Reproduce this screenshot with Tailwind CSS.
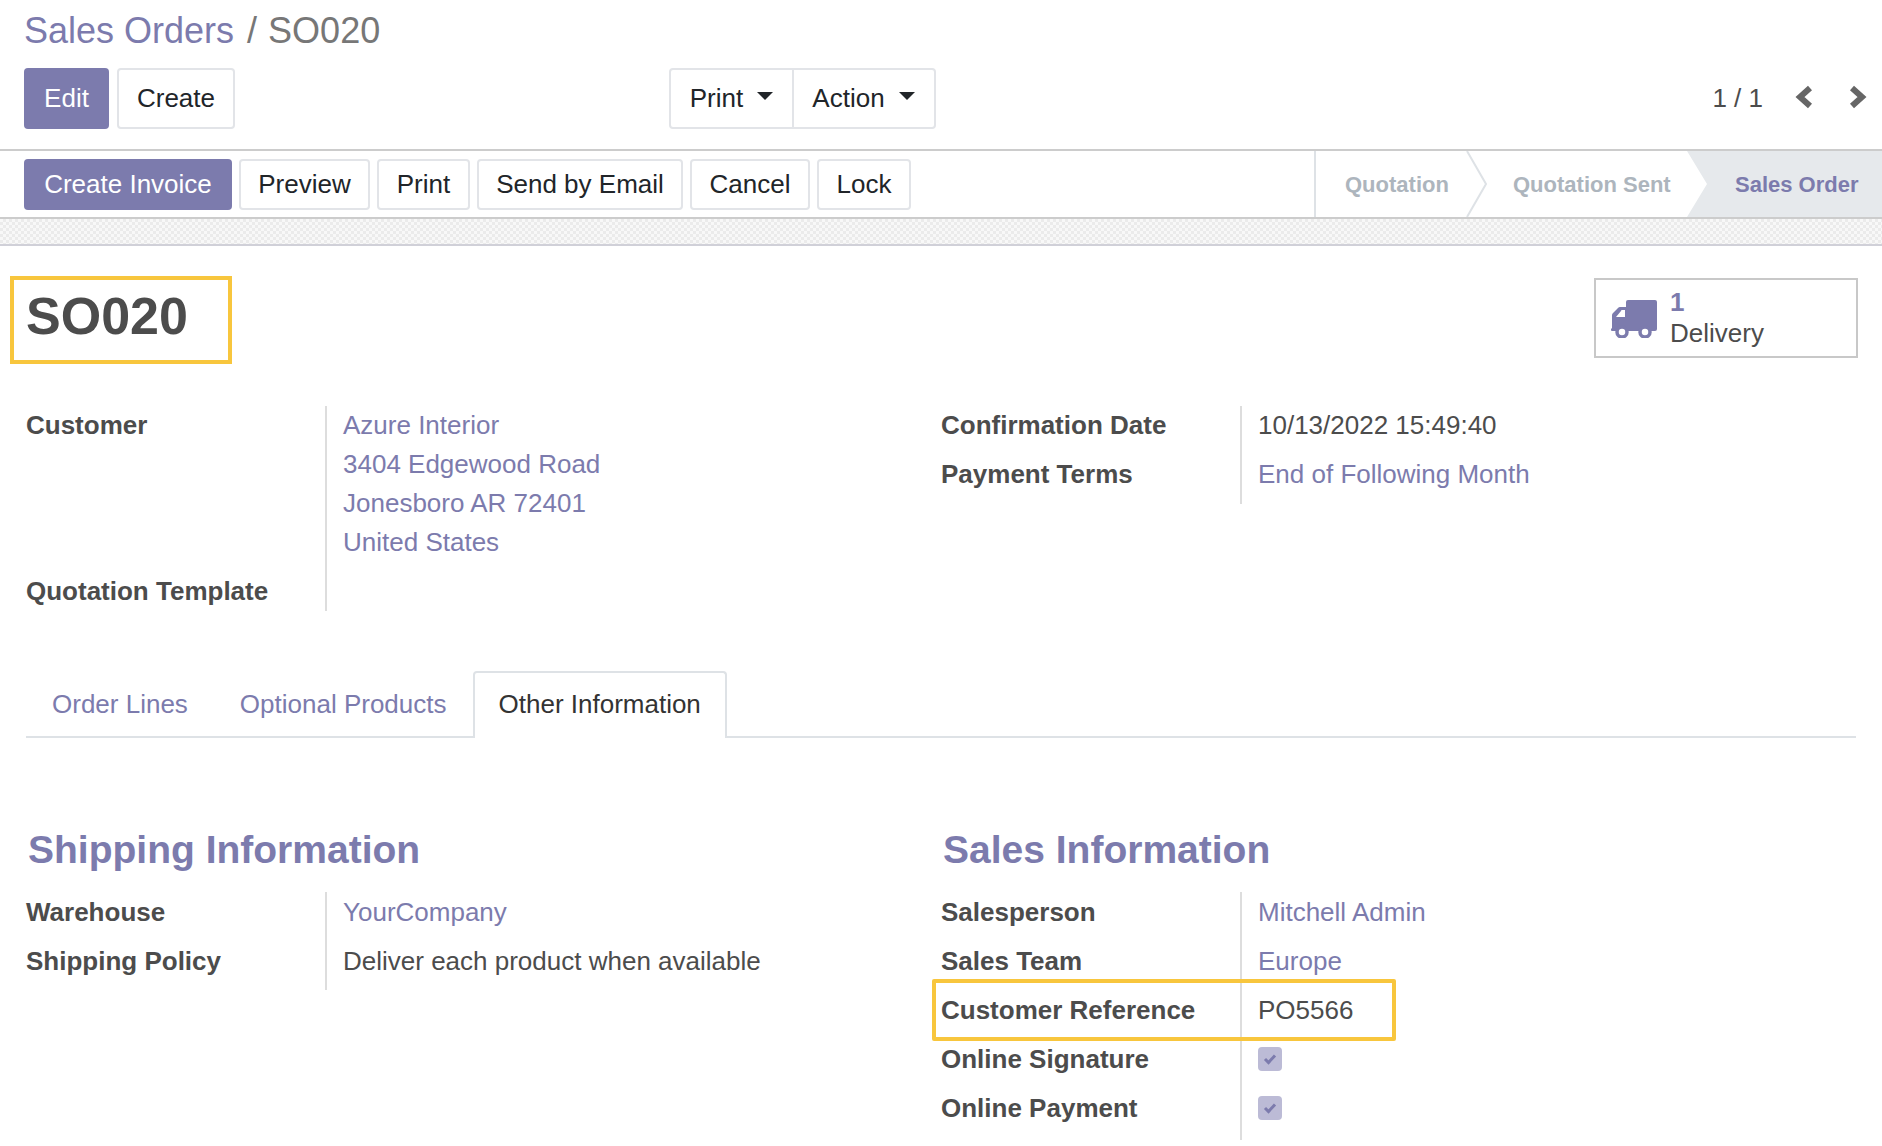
<!DOCTYPE html>
<html lang="en">
<head>
  <meta charset="UTF-8">
  <title>SO020 - Sales Orders</title>
  <script src="https://cdn.jsdelivr.net/npm/@tailwindcss/browser@4"></script>
</head>
<body class="bg-white text-[#4c4c4c] font-['Liberation_Sans',Arial,sans-serif] text-[26px] leading-[36px]">
  <div class="w-[1882px] h-[1146px] overflow-hidden">

    <!-- Control panel -->
    <div class="h-[149px] px-6">
      <div class="h-[60px] pt-[1px] flex items-center text-[36px] text-[#777]">
        <span class="text-[#7c7bad]">Sales Orders</span>
        <span class="ml-[13px] mr-[11px]">/</span>
        <span>SO020</span>
      </div>
      <div class="h-[61px] mt-[8px] flex items-center text-[#212529]">
        <div class="w-[645px] flex gap-[8px]">
          <div class="h-[61px] w-[85px] pb-[2px] rounded-[4px] bg-[#7c7bad] text-white flex items-center justify-center">Edit</div>
          <div class="h-[61px] w-[118px] pb-[2px] rounded-[4px] border-2 border-[#e2e4e8] flex items-center justify-center">Create</div>
        </div>
        <div class="h-[61px] w-[267px] pb-[2px] rounded-[4px] border-2 border-[#e2e4e8] flex">
          <div class="w-[123px] mb-[-2px] pb-[2px] border-r-2 border-[#e2e4e8] flex items-center justify-center gap-[14px]">Print<span class="mb-[3px] border-x-[8px] border-t-[8px] border-x-transparent border-t-[#212529]"></span></div>
          <div class="flex-1 pr-[1px] flex items-center justify-center gap-[14px]">Action<span class="mb-[3px] border-x-[8px] border-t-[8px] border-x-transparent border-t-[#212529]"></span></div>
        </div>
        <div class="ml-auto flex items-center pb-[2px] text-[#4c4c4c]">
          <span class="mr-[32px]">1 / 1</span>
          <svg class="w-[18px] h-[24px] mr-[36px] mb-[2px]" viewBox="0 0 18 24" fill="none" stroke="#666" stroke-width="6"><path d="M15 3 5 12l10 9"/></svg>
          <svg class="w-[18px] h-[24px] mr-[-9px] mb-[2px]" viewBox="0 0 18 24" fill="none" stroke="#666" stroke-width="6"><path d="M3 3l10 9-10 9"/></svg>
        </div>
      </div>
    </div>

    <!-- Status bar -->
    <div class="h-[70px] border-y-2 border-[#ccc] flex items-center justify-between pl-6">
      <div class="flex gap-[7px] text-[#212529]">
        <div class="h-[51px] w-[208px] rounded-[4px] bg-[#7c7bad] text-white flex items-center justify-center">Create Invoice</div>
        <div class="h-[51px] w-[131px] rounded-[4px] border-2 border-[#e2e4e8] flex items-center justify-center">Preview</div>
        <div class="h-[51px] w-[93px] rounded-[4px] border-2 border-[#e2e4e8] flex items-center justify-center">Print</div>
        <div class="h-[51px] w-[206px] rounded-[4px] border-2 border-[#e2e4e8] flex items-center justify-center">Send by Email</div>
        <div class="h-[51px] w-[120px] rounded-[4px] border-2 border-[#e2e4e8] flex items-center justify-center">Cancel</div>
        <div class="h-[51px] w-[94px] rounded-[4px] border-2 border-[#e2e4e8] flex items-center justify-center">Lock</div>
      </div>
      <div class="w-[568px] h-[66px] border-l-2 border-[#dee2e6] flex text-[22px] font-bold text-[#adb5bd]">
        <div class="relative w-[151px] pl-[29px] pt-[2px] flex items-center">
          Quotation
          <svg class="absolute left-[150px] top-0 w-[22px] h-[66px]" viewBox="0 0 22 66" fill="none" stroke="#dee2e6" stroke-width="2"><path d="M1 0l19 33L1 66"/></svg>
        </div>
        <div class="w-[220px] pl-[46px] pt-[2px] flex items-center">Quotation Sent</div>
        <div class="flex-1 pl-[48px] pt-[2px] flex items-center bg-[#e6e9ec] text-[#7c7bad] [clip-path:polygon(0_0,100%_0,100%_100%,0_100%,20px_50%)]">Sales Order</div>
      </div>
    </div>
    <div class="h-[27px] border-b-2 border-[#d0d0d8] bg-[repeating-conic-gradient(#ebebeb_0%_25%,#f8f8f8_0%_50%)] bg-size-[6px_6px]"></div>

    <!-- Sheet -->
    <div class="pl-[26px] pr-[24px]">
      <div class="h-[133px] pt-[31px] flex justify-between">
        <div class="ml-[-16px] mt-[-1px] w-[222px] h-[88px] border-4 border-[#f8c63d] pl-[12px] pt-[6px] text-[52px] leading-[60px] font-bold">SO020</div>
        <div class="w-[264px] h-[80px] mt-[1px] border-2 border-[#c8c8c8] flex items-center pl-[15px] gap-[13px] leading-[31px]">
          <svg class="w-[46px] h-[38px] mt-[1px]" viewBox="0 0 46 38">
            <path fill="#7c7bad" d="M15 2a2 2 0 0 1 2-2h27a2 2 0 0 1 2 2v27a2 2 0 0 1-2 2H1a1 1 0 0 1-1-1v-1l1-1v-13a3 3 0 0 1 1-2l5-5a3 3 0 0 1 2-1h6z"/>
            <path fill="#fff" d="M5 17l5-6a1 1 0 0 1 1-1h3v7z"/>
            <circle cx="11" cy="32" r="5" fill="#fff" stroke="#7c7bad" stroke-width="3.500"/>
            <circle cx="34" cy="32" r="5" fill="#fff" stroke="#7c7bad" stroke-width="3.500"/>
          </svg>
          <div>
            <div class="font-bold text-[#7c7bad]">1</div>
            <div>Delivery</div>
          </div>
        </div>
      </div>

      <!-- Customer / dates -->
      <div class="h-[292px] pt-[27px] flex">
        <div class="w-[915px] flex">
          <div class="w-[299px] font-bold">
            <div class="pt-[1px]">Customer</div>
            <div class="mt-[130px]">Quotation Template</div>
          </div>
          <div class="h-[205px] border-l-2 border-[#dddddd] pl-[16px] text-[#7c7bad] leading-[39px]">
            <div>Azure Interior</div>
            <div>3404 Edgewood Road</div>
            <div>Jonesboro AR 72401</div>
            <div>United States</div>
          </div>
        </div>
        <div class="flex">
          <div class="w-[299px] font-bold leading-[49px] h-[98px]">
            <div class="mt-[-5px]">Confirmation Date</div>
            <div>Payment Terms</div>
          </div>
          <div class="h-[98px] border-l-2 border-[#dddddd] pl-[16px] leading-[49px]">
            <div class="mt-[-5px]">10/13/2022 15:49:40</div>
            <div class="text-[#7c7bad]">End of Following Month</div>
          </div>
        </div>
      </div>

      <!-- Tabs -->
      <div class="h-[67px] mr-[2px] border-b-2 border-[#dee2e6] flex items-stretch">
        <div class="px-[26px] flex items-center text-[#7c7bad]">Order Lines</div>
        <div class="px-[26px] flex items-center text-[#7c7bad]">Optional Products</div>
        <div class="h-[67px] px-[24px] pb-[4px] border-2 border-b-0 border-[#dee2e6] rounded-t-[4px] bg-white flex items-center text-[#333]">Other Information</div>
      </div>

      <!-- Other information -->
      <div class="pt-[88px] flex">
        <div class="w-[915px]">
          <div class="pl-[2px] h-[47px] flex items-center text-[39px] font-bold text-[#7c7bad]">Shipping Information</div>
          <div class="mt-[19px] flex leading-[49px]">
            <div class="w-[299px] font-bold">
              <div class="mt-[-4px]">Warehouse</div>
              <div>Shipping Policy</div>
            </div>
            <div class="h-[98px] border-l-2 border-[#dddddd] pl-[16px]">
              <div class="mt-[-4px] text-[#7c7bad]">YourCompany</div>
              <div>Deliver each product when available</div>
            </div>
          </div>
        </div>
        <div>
          <div class="pl-[2px] h-[47px] flex items-center text-[39px] font-bold text-[#7c7bad]">Sales Information</div>
          <div class="mt-[19px] relative flex leading-[49px]">
            <div class="absolute left-[-9px] top-[87px] w-[464px] h-[62px] border-4 border-[#f8c63d] rounded-[2px]"></div>
            <div class="w-[299px] font-bold">
              <div class="mt-[-4px]">Salesperson</div>
              <div>Sales Team</div>
              <div>Customer Reference</div>
              <div>Online Signature</div>
              <div>Online Payment</div>
            </div>
            <div class="h-[248px] border-l-2 border-[#dddddd] pl-[16px]">
              <div class="mt-[-4px] text-[#7c7bad]">Mitchell Admin</div>
              <div class="text-[#7c7bad]">Europe</div>
              <div>PO5566</div>
              <div class="h-[49px] mt-[-1px] flex items-center">
                <div class="w-[24px] h-[24px] rounded-[4px] bg-[#bcbbd6] flex items-center justify-center">
                  <svg class="w-[14px] h-[12px]" viewBox="0 0 14 12" fill="none" stroke="#7c7bad" stroke-width="3"><path d="M2 6l3.500 3.500L12 2.500"/></svg>
                </div>
              </div>
              <div class="h-[49px] flex items-center">
                <div class="w-[24px] h-[24px] rounded-[4px] bg-[#bcbbd6] flex items-center justify-center">
                  <svg class="w-[14px] h-[12px]" viewBox="0 0 14 12" fill="none" stroke="#7c7bad" stroke-width="3"><path d="M2 6l3.500 3.500L12 2.500"/></svg>
                </div>
              </div>
            </div>
          </div>
        </div>
      </div>
    </div>
  </div>
</body>
</html>
